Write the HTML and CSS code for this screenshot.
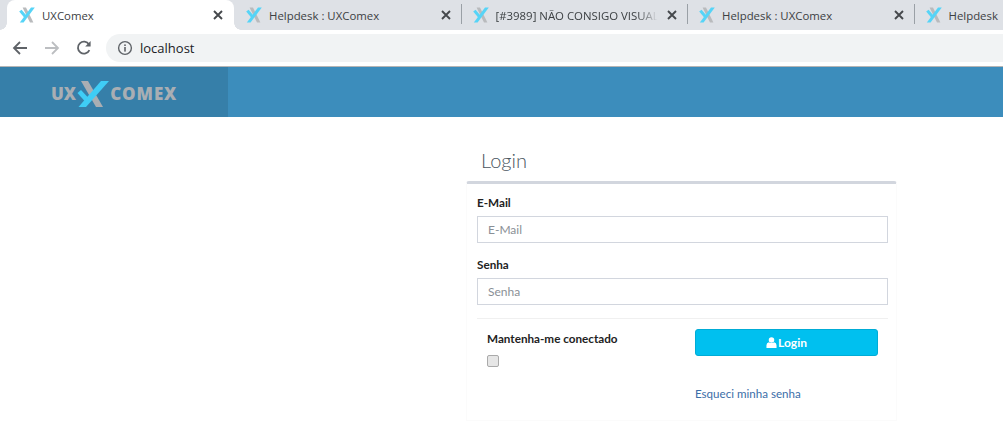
FILE: index.html
```html
<!DOCTYPE html>
<html lang="pt-BR">
<head>
<meta charset="utf-8">
<title>UXComex</title>
<link rel="stylesheet" href="styles.css">
</head>
<body>
<svg class="defs" width="0" height="0" aria-hidden="true">
  <symbol id="fav" viewBox="0 0 16 16">
    <path d="M3.6 0.5 H7 L14.4 15.5 H11 Z" fill="#b9bbbd"/>
    <path d="M0.2 4.4 L2.6 2.8 L7.6 8.8 L5.6 11 Z" fill="#56d4f7"/>
    <path d="M12 0.5 H15.8 L4.6 15.5 H0.8 Z" fill="#56d4f7"/>
  </symbol>
  <symbol id="close" viewBox="0 0 10 10">
    <path d="M1 1 L9 9 M9 1 L1 9" stroke="#45484c" stroke-width="1.9" fill="none"/>
  </symbol>
</svg>

<div class="tabstrip">
  <div class="tab tab-active">
    <svg class="fav"><use href="#fav"/></svg>
    <span class="tab-title">UXComex</span>
    <svg class="close"><use href="#close"/></svg>
  </div>
  <div class="tab tab-second">
    <svg class="fav"><use href="#fav"/></svg>
    <span class="tab-title">Helpdesk : UXComex</span>
    <svg class="close"><use href="#close"/></svg>
  </div>
  <div class="tab tab-third">
    <svg class="fav"><use href="#fav"/></svg>
    <span class="tab-title tab-fade">[#3989] NÃO CONSIGO VISUALIZAR</span>
    <svg class="close"><use href="#close"/></svg>
  </div>
  <div class="tab tab-fourth">
    <svg class="fav"><use href="#fav"/></svg>
    <span class="tab-title">Helpdesk : UXComex</span>
    <svg class="close"><use href="#close"/></svg>
  </div>
  <div class="tab tab-last">
    <svg class="fav"><use href="#fav"/></svg>
    <span class="tab-title">Helpdesk</span>
  </div>
</div>

<div class="toolbar">
  <svg class="nav-icon" viewBox="0 0 16 16"><path d="M15 8 H2 M8 2 L2 8 L8 14" fill="none" stroke="#5f6368" stroke-width="1.8"/></svg>
  <svg class="nav-icon" viewBox="0 0 16 16"><path d="M1 8 H14 M8 2 L14 8 L8 14" fill="none" stroke="#bcbec1" stroke-width="1.8"/></svg>
  <svg class="nav-icon" viewBox="0 0 16 16"><path d="M13.4 10.2 A6 6 0 1 1 13 4.4" fill="none" stroke="#5f6368" stroke-width="1.8"/><path d="M14.6 1 V6.4 H9.2 Z" fill="#5f6368"/></svg>
  <div class="omnibox">
    <svg class="info" viewBox="0 0 16 16"><circle cx="8" cy="8" r="6.4" fill="none" stroke="#5f6368" stroke-width="1.4"/><rect x="7.2" y="7" width="1.6" height="4.6" fill="#5f6368"/><rect x="7.2" y="4.4" width="1.6" height="1.6" fill="#5f6368"/></svg>
    <span class="url">localhost</span>
  </div>
</div>

<header class="app-header">
  <div class="logo-box">
    <span class="logo-text">UX</span>
    <svg class="logo-mark" viewBox="0 0 32 26">
      <path d="M4 0 H11 L26 26 H19 Z" fill="#a9aeb3"/>
      <path d="M0.5 12 L4 9 L11.5 17 L8 20.5 Z" fill="#3fcdf6"/>
      <path d="M24 0 H32 L9 26 H1.5 Z" fill="#3fcdf6"/>
    </svg>
    <span class="logo-text logo-text-wide">COMEX</span>
  </div>
</header>

<main class="content">
  <section class="login">
    <h1 class="login-title">Login</h1>
    <form class="card">
      <label class="field-label" for="email">E-Mail</label>
      <input class="field" id="email" type="text" placeholder="E-Mail">
      <label class="field-label field-label-next" for="senha">Senha</label>
      <input class="field" id="senha" type="password" placeholder="Senha">
      <div class="divider"></div>
      <div class="bottom">
        <div class="remember">
          <label class="field-label" for="keep">Mantenha-me conectado</label>
          <input class="check" id="keep" type="checkbox">
        </div>
        <div class="actions">
          <button class="btn" type="button">
            <svg class="user" viewBox="0 0 12 12"><circle cx="6" cy="3.2" r="3" fill="#fff"/><path d="M0.5 12 V9 Q0.5 6.2 3.2 5.6 Q6 7.6 8.8 5.6 Q11.5 6.2 11.5 9 V12 Z" fill="#fff"/></svg>
            Login
          </button>
          <a class="forgot" href="#">Esqueci minha senha</a>
        </div>
      </div>
    </form>
  </section>
</main>
</body>
</html>
```
FILE: styles.css
```css
* { box-sizing: border-box; }
html, body { margin: 0; padding: 0; }
body {
  width: 1003px;
  height: 422px;
  overflow: hidden;
  background: #fff;
  font-family: "Lato", "Noto Sans", sans-serif;
}
.defs { position: absolute; }

/* Browser tabs */
.tabstrip {
  display: flex;
  height: 30px;
  background: #dee1e6;
  overflow: hidden;
  padding-left: 7px;
  font-family: "Open Sans", "Noto Sans", sans-serif;
  font-size: 11.4px;
  color: #3c4043;
}
.tab {
  flex: none;
  display: flex;
  align-items: center;
  width: 226.5px;
  height: 30px;
  position: relative;
}
.tab-active {
  width: 227px;
  background: #fff;
  border-radius: 8px 8px 0 0;
  padding: 0 11px 0 12px;
}
.tab-active::before, .tab-active::after {
  content: "";
  position: absolute;
  bottom: 0;
  width: 7px;
  height: 7px;
}
.tab-active::before {
  left: -7px;
  background: radial-gradient(circle at 0 0, #dee1e6 6.5px, #fff 7px);
}
.tab-active::after {
  right: -7px;
  background: radial-gradient(circle at 100% 0, #dee1e6 6.5px, #fff 7px);
}
.tab-second { padding: 0 10px 0 12px; }
.tab-third { padding: 0 10px 0 12px; }
.tab-fourth { padding: 0 10px 0 12px; }
.tab-last { width: 100px; padding: 0 0 0 12px; }
.tab-third::before, .tab-fourth::before, .tab-last::before {
  content: "";
  position: absolute;
  left: 0;
  top: 4px;
  width: 1px;
  height: 20px;
  background: #9aa0a6;
}
.fav { width: 16px; height: 16px; flex: none; margin-right: 7px; }
.tab-title { flex: 1; white-space: nowrap; overflow: hidden; }
.tab-fade {
  -webkit-mask-image: linear-gradient(to right, #000 86%, transparent 98%);
  mask-image: linear-gradient(to right, #000 86%, transparent 98%);
}
.close { width: 10px; height: 10px; flex: none; margin-left: 6px; }

/* Browser toolbar */
.toolbar {
  display: flex;
  align-items: center;
  gap: 16px;
  height: 37px;
  padding: 4px 0 4px 12px;
  background: #fff;
  border-bottom: 1px solid #b5b5b5;
}
.nav-icon { width: 16px; height: 16px; flex: none; }
.omnibox {
  flex: 1;
  display: flex;
  align-items: center;
  gap: 7px;
  height: 28px;
  margin-left: -2px;
  padding-left: 11px;
  background: #f1f3f4;
  border-radius: 14px 0 0 14px;
}
.info { width: 16px; height: 16px; }
.url { font-size: 13px; color: #202124; font-family: "Open Sans", sans-serif; }

/* App header */
.app-header {
  height: 50px;
  background: #3c8dbc;
}
.logo-box {
  display: flex;
  align-items: center;
  width: 228px;
  height: 50px;
  padding: 3px 0 0 51px;
  background: #367fa9;
}
.logo-text {
  font-family: "Open Sans", sans-serif;
  font-weight: 800;
  font-size: 17px;
  line-height: 20px;
  color: #a9aeb3;
}
.logo-text-wide { letter-spacing: 0.9px; }
.logo-mark { width: 32px; height: 26px; margin: 0 1px 0 1px; }

/* Login */
.content { padding-left: 466px; }
.login { width: 431px; }
.login-title {
  margin: 0;
  height: 64px;
  padding: 30px 0 0 15px;
  font-family: "Lato", sans-serif;
  font-weight: 300;
  font-size: 20px;
  line-height: 27px;
  color: #4a5560;
}
.card {
  display: flex;
  flex-direction: column;
  height: 240px;
  padding: 10px 8px 0 10px;
  border: 1px solid #fbfbfb;
  border-top: 3px solid #d2d6de;
  border-radius: 3px 3px 0 0;
}
.field-label {
  font-size: 11.7px;
  font-weight: 700;
  line-height: 16px;
  color: #222;
  display: block;
}
.field-label-next { margin-top: 13px; }
.field {
  display: block;
  width: 100%;
  height: 27px;
  margin-top: 6px;
  padding: 0 10px;
  border: 1px solid #d2d6de;
  background: #fff;
  font-family: inherit;
  font-size: 12px;
  outline: none;
}
.field::placeholder { color: #8a8f96; opacity: 1; }
.divider {
  height: 1px;
  margin-top: 13px;
  background: #f0f0f0;
}
.bottom {
  display: grid;
  grid-template-columns: 218px 183px;
  margin-top: 10px;
}
.remember { padding: 1px 0 0 10px; }
.check {
  display: block;
  width: 12px;
  height: 12px;
  margin: 9px 0 0 0;
  appearance: none;
  background: #e6e6e6;
  border: 1px solid #aaa;
  border-radius: 2px;
}
.actions { display: flex; flex-direction: column; align-items: flex-start; }
.btn {
  display: flex;
  align-items: center;
  justify-content: center;
  gap: 1px;
  width: 183px;
  height: 27px;
  background: #00c0ef;
  border: 1px solid #00acd6;
  border-radius: 3px;
  color: #fff;
  font-family: inherit;
  font-size: 12px;
  font-weight: 700;
}
.user { width: 11px; height: 11px; }
.forgot {
  margin-top: 30px;
  font-size: 11.6px;
  line-height: 16px;
  color: #3c6ea8;
  text-decoration: none;
}
```
